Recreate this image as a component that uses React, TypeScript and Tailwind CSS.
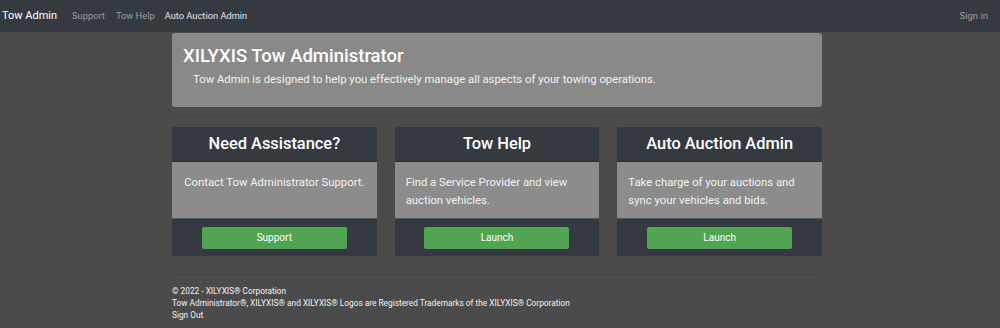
import React from "react";

const cards = [
  { title: "Need Assistance?", body: "Contact Tow Administrator Support.", center: true, action: "Support" },
  { title: "Tow Help", body: "Find a Service Provider and view auction vehicles.", center: false, action: "Launch" },
  { title: "Auto Auction Admin", body: "Take charge of your auctions and sync your vehicles and bids.", center: false, action: "Launch" },
];

export default function App() {
  return (
    <div className="min-h-[328px] bg-[#4b4b4b] text-white" style={{ fontFamily: "Roboto, 'Liberation Sans', sans-serif" }}>
      {/* Navbar */}
      <nav className="h-[32px] bg-[#343a40] flex items-center pl-[2px]">
        <span className="text-[11px] text-white mr-[15px]">Tow Admin</span>
        <span className="text-[9.3px] text-[#9a9da1] mr-[11px]">Support</span>
        <span className="text-[9.3px] text-[#9a9da1] mr-[10px]">Tow Help</span>
        <span className="text-[9.3px] text-[#e6e6e6]">Auto Auction Admin</span>
        <span className="ml-auto mr-[12px] text-[9.5px] text-[#9a9da1]">Sign in</span>
      </nav>

      <div className="w-[650px] ml-[172px]">
        {/* Jumbotron */}
        <div className="mt-[1px] h-[74px] bg-[#898989] rounded-[3px] px-[11px] pt-[11px]">
          <h1 className="text-[18.5px] font-medium leading-[24px]">XILYXIS Tow Administrator</h1>
          <p className="text-[11.3px] leading-[16px] mt-[4px] pl-[10px] text-[#f2f2f2]">
            Tow Admin is designed to help you effectively manage all aspects of your towing operations.
          </p>
        </div>

        <hr className="mt-[9px] border-t border-[#444444]" />

        {/* Cards */}
        <div className="mt-[10px] grid grid-cols-3 gap-[18px]">
          {cards.map((c) => (
            <div key={c.title} className="bg-[#343a40] rounded-[2px] overflow-hidden">
              <div className="h-[35px] flex items-center justify-center text-[16.4px] font-medium border-b border-[#2b2f33]">
                {c.title}
              </div>
              <div
                className={
                  "h-[57px] bg-[#8c8c8c] pt-[12px] text-[11.3px] leading-[18px] text-[#f2f2f2] border-b border-[#555a5f] " +
                  (c.center ? "text-center px-[6px]" : "text-left pl-[11px] pr-[6px]")
                }
              >
                {c.body}
              </div>
              <div className="h-[37px] flex items-center justify-center">
                <button className="w-[145px] h-[22px] bg-[#51a552] rounded-[2px] text-[10px] text-white">
                  {c.action}
                </button>
              </div>
            </div>
          ))}
        </div>

        <hr className="mt-[18px] border-t border-[#444444]" />

        {/* Footer */}
        <footer className="mt-[10px] text-[8.3px] leading-[12px] text-[#f2f2f2]">
          <div>© 2022 - XILYXIS® Corporation</div>
          <div>Tow Administrator®, XILYXIS® and XILYXIS® Logos are Registered Trademarks of the XILYXIS® Corporation</div>
          <div>Sign Out</div>
        </footer>
      </div>
    </div>
  );
}
